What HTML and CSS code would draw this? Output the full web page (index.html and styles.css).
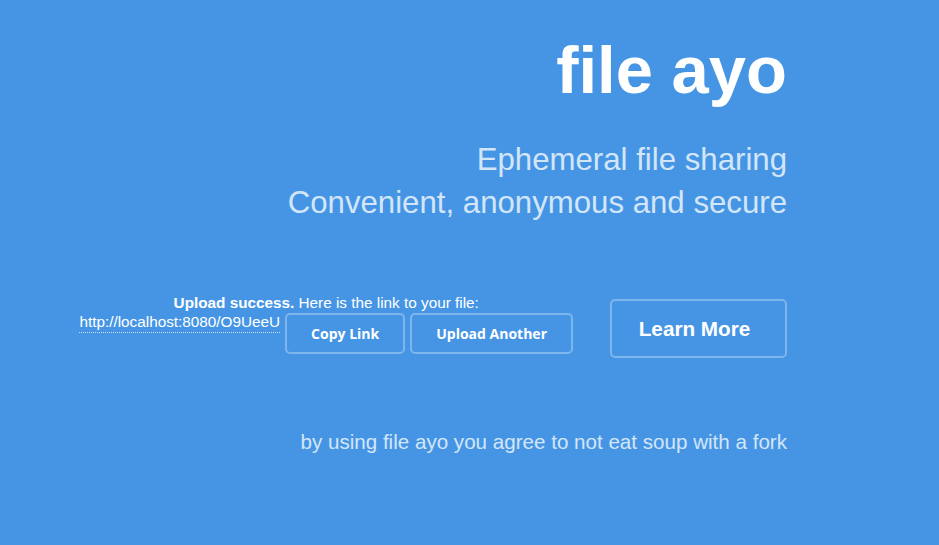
FILE: index.html
```html
<!DOCTYPE html>
<html>
<head>
<meta charset="utf-8">
<link rel="stylesheet" href="styles.css">
</head>
<body>
<div class="page">
  <header class="hero">
    <h1 class="title">file ayo</h1>
    <p class="tagline">Ephemeral file sharing<br>Convenient, anonymous and secure</p>
  </header>
  <section class="actions">
    <div class="upload">
      <p class="upload-msg"><strong>Upload success.</strong> Here is the link to your file:</p>
      <div class="link-row">
        <a class="file-link" href="#">http://localhost:8080/O9UeeU</a>
        <button class="btn small">Copy Link</button>
        <button class="btn small">Upload Another</button>
      </div>
    </div>
    <button class="btn large">Learn More</button>
  </section>
  <p class="terms">by using file ayo you agree to not eat soup with a fork</p>
</div>
</body>
</html>
```

FILE: styles.css
```css
html, body {
  margin: 0;
  padding: 0;
  background: #4695e5;
  height: 100%;
}
body {
  font-family: "Liberation Sans", Arial, sans-serif;
  color: #ffffff;
}
.page {
  width: 939px;
  height: 545px;
  box-sizing: border-box;
  padding: 0 152px 0 0;
  display: flex;
  flex-direction: column;
  align-items: flex-end;
}
.hero {
  text-align: right;
}
.title {
  margin: 25px 0 0 0;
  font-size: 67px;
  font-weight: 700;
  line-height: 90px;
}
.tagline {
  margin: 23px 0 0 0;
  font-size: 31.2px;
  line-height: 43px;
  color: #d3e6f8;
}
.actions {
  margin-top: 70px;
  display: flex;
  align-items: flex-start;
  gap: 37px;
}
.upload {
  display: flex;
  flex-direction: column;
  align-items: center;
}
.upload-msg {
  margin: 0;
  font-size: 15.3px;
  line-height: 18px;
}
.link-row {
  display: flex;
  align-items: flex-start;
  gap: 5px;
  margin-top: 1px;
}
.file-link {
  color: #ffffff;
  text-decoration: none;
  font-size: 15.3px;
  line-height: 18px;
  border-bottom: 1px dotted rgba(255,255,255,0.7);
  padding-bottom: 1px;
  margin-top: 0;
}
.btn {
  background: transparent;
  color: #ffffff;
  border: 2px solid rgba(255,255,255,0.3);
  border-radius: 5px;
  cursor: pointer;
  font-weight: 700;
}
.btn.small {
  font-family: "Open Sans", "DejaVu Sans", sans-serif;
  font-size: 14px;
  height: 41px;
  padding: 0 24px;
}
.btn.large {
  font-family: "Liberation Sans", Arial, sans-serif;
  font-size: 20.7px;
  height: 59px;
  width: 177px;
  padding: 0 8px 0 0;
  margin-top: 5px;
}
.terms {
  margin: 72px 0 0 0;
  font-size: 20.6px;
  color: #d3e6f8;
}
```
